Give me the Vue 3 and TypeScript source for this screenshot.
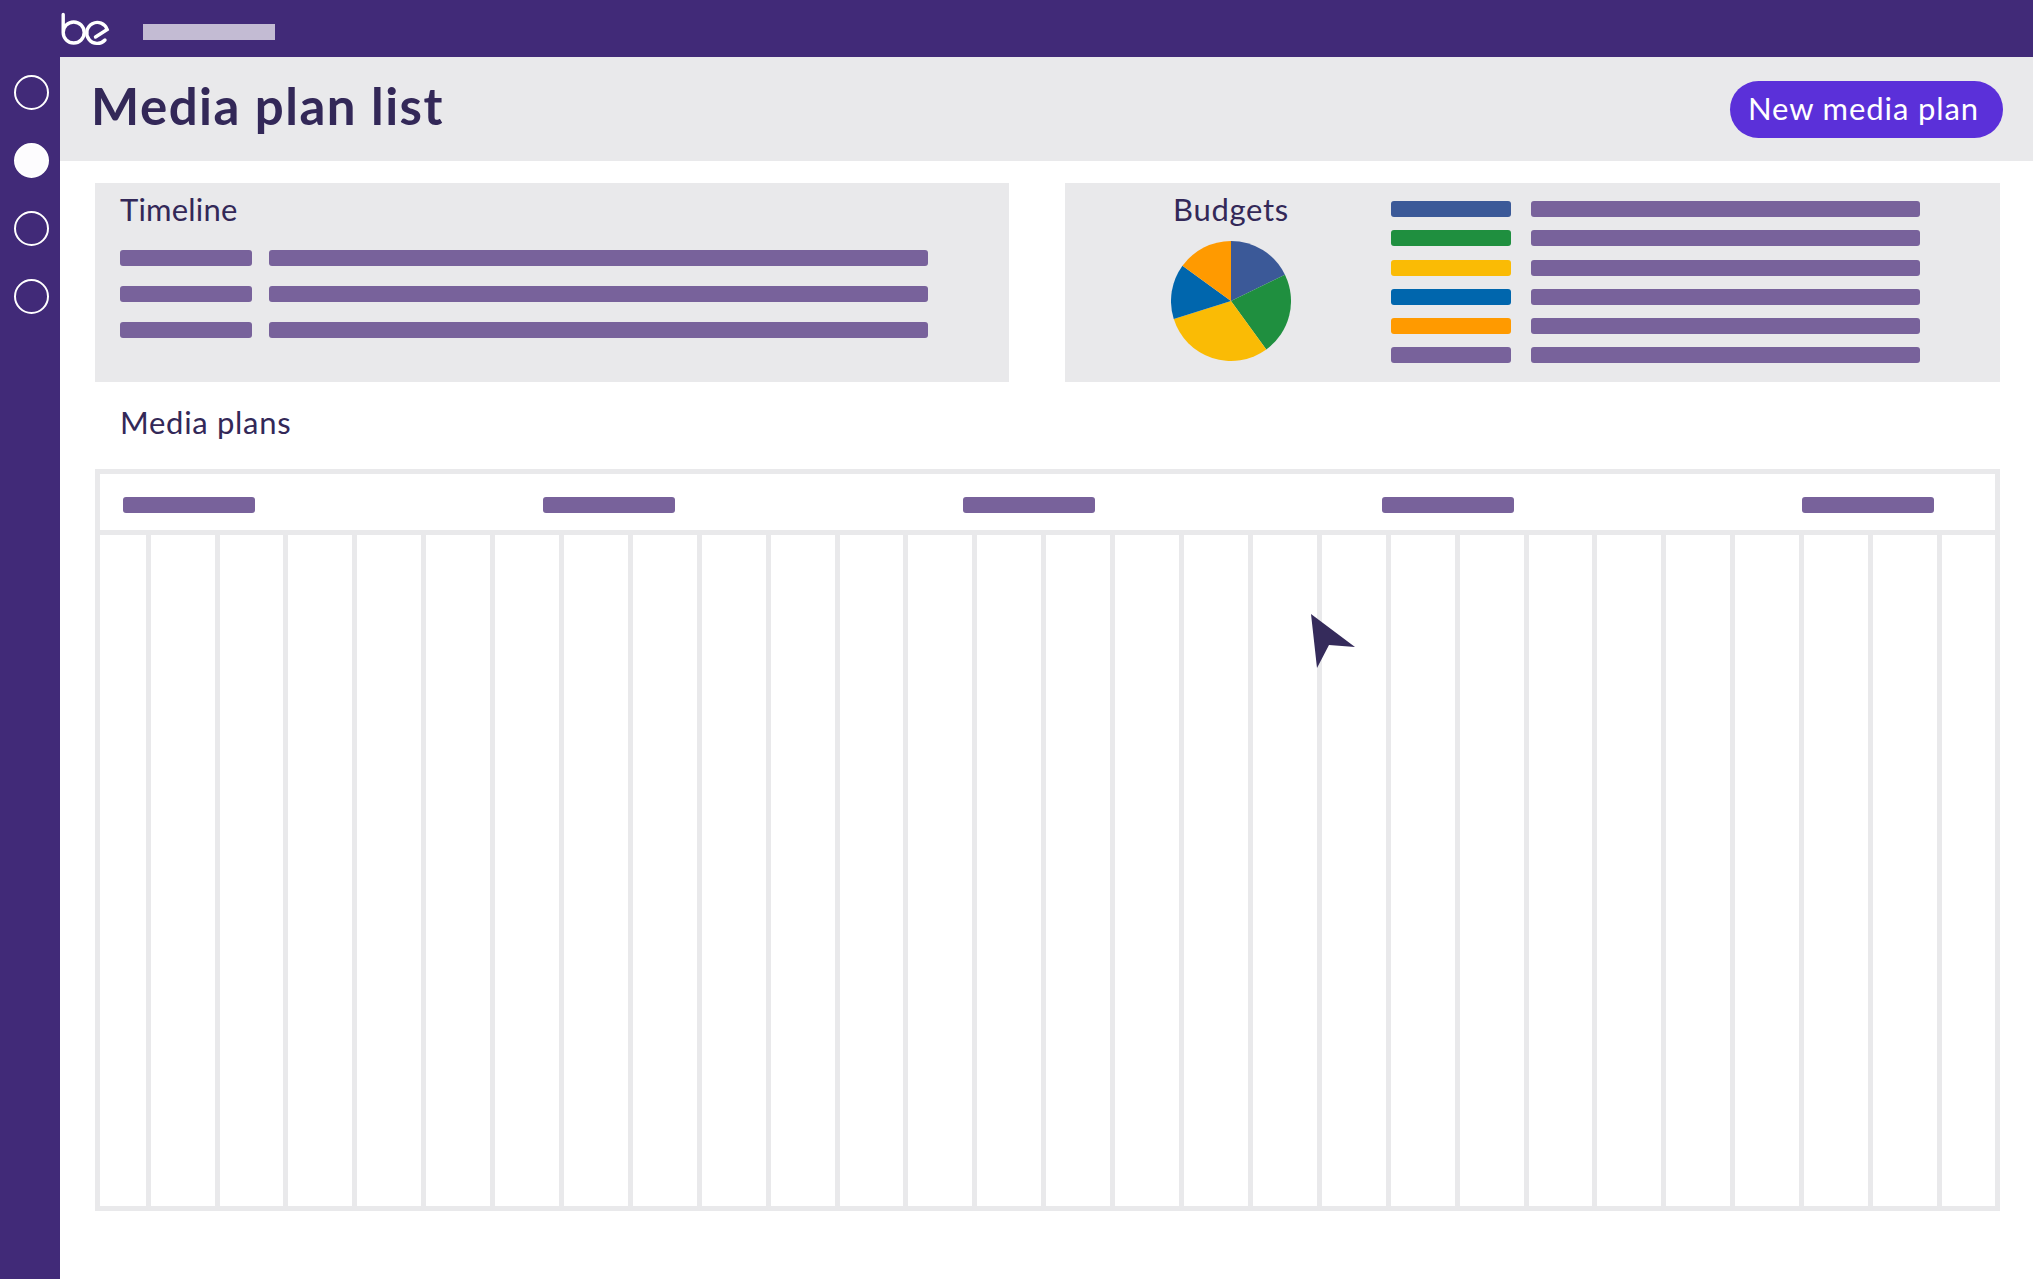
<script setup lang="ts">
const navItems = [false, true, false, false]
const timelineRows = 3
const budgetColors = ['#3b5998', '#1f8f3f', '#fabb05', '#0066ad', '#ff9a00', '#78629b']
const tableHeads = 5
const cols = 28

// pie: start and end angle in degrees, clockwise from the top
const slices = [
  { from: 0, to: 64, color: '#3b5998' },
  { from: 64, to: 144, color: '#1f8f3f' },
  { from: 144, to: 252.5, color: '#fabb05' },
  { from: 252.5, to: 306, color: '#0066ad' },
  { from: 306, to: 360, color: '#ff9a00' },
]

const slicePath = (from: number, to: number) => {
  const r = 60
  const pt = (a: number) => {
    const rad = (a * Math.PI) / 180
    return `${(60 + r * Math.sin(rad)).toFixed(2)} ${(60 - r * Math.cos(rad)).toFixed(2)}`
  }
  const large = to - from > 180 ? 1 : 0
  return `M60 60L${pt(from)}A${r} ${r} 0 ${large} 1 ${pt(to)}Z`
}
</script>

<template>
  <div class="page">
    <header class="topbar">
      <svg class="logo" width="50" height="34" viewBox="0 0 50 34" fill="none" stroke="#fff" stroke-width="3.4" stroke-linecap="round">
        <path d="M3.2 2.5V20.5a10.5 10.5 0 1 0 10.5-10.5A10.5 10.5 0 0 0 3.2 20.5" />
        <path d="M45 28A10.5 10.5 0 1 1 47.2 17.5L35.5 25" />
      </svg>
      <div class="crumb"></div>
    </header>
    <div class="body">
      <nav class="sidebar">
        <span v-for="(active, i) in navItems" :key="i" class="dot" :class="{ active }"></span>
      </nav>
      <main class="main">
        <div class="titlebar">
          <h1>Media plan list</h1>
          <button class="new-btn">New media plan</button>
        </div>
        <section class="panels">
          <div class="panel timeline">
            <h2 class="tl-title">Timeline</h2>
            <div class="tl-rows">
              <div v-for="n in timelineRows" :key="n" class="tl-row">
                <i class="bar short"></i>
                <i class="bar long"></i>
              </div>
            </div>
          </div>
          <div class="panel budgets">
            <div class="pie-col">
              <h2>Budgets</h2>
              <svg width="120" height="120" viewBox="0 0 120 120">
                <path v-for="s in slices" :key="s.from" :d="slicePath(s.from, s.to)" :fill="s.color" />
              </svg>
            </div>
            <div class="legend">
              <div v-for="c in budgetColors" :key="c" class="legend-row">
                <i class="bar key" :style="{ background: c }"></i>
                <i class="bar val"></i>
              </div>
            </div>
          </div>
        </section>
        <h2 class="plans-title">Media plans</h2>
        <div class="table">
          <div class="thead">
            <i v-for="n in tableHeads" :key="n" class="bar short"></i>
          </div>
          <div class="tbody">
            <div v-for="n in cols" :key="n" class="col"></div>
          </div>
        </div>
      </main>
    </div>
    <svg class="cursor" width="44" height="54" viewBox="0 0 44 54">
      <path d="M0 0L44 33L18 31L6 54Z" fill="#352b5b" />
    </svg>
  </div>
</template>

<style>
html,
body {
  margin: 0;
  background: #fff;
}
</style>

<style scoped>
.page {
  position: relative;
  width: 2033px;
  height: 1279px;
  overflow: hidden;
  display: flex;
  flex-direction: column;
  font-family: Lato, 'Noto Sans', sans-serif;
  color: #332858;
}
.topbar {
  height: 57px;
  flex: none;
  background: #412a78;
  display: flex;
  align-items: flex-start;
  padding-left: 60px;
  box-sizing: border-box;
}
.logo {
  margin-top: 12px;
}
.crumb {
  width: 132px;
  height: 16px;
  margin: 24px 0 0 33px;
  background: #c3bbd3;
}
.body {
  flex: 1;
  display: flex;
}
.sidebar {
  width: 60px;
  flex: none;
  background: #412a78;
  display: flex;
  flex-direction: column;
  align-items: center;
  gap: 33px;
  padding-top: 18px;
  box-sizing: border-box;
}
.dot {
  width: 35px;
  height: 35px;
  box-sizing: border-box;
  border: 2px solid #fff;
  border-radius: 50%;
  margin-left: 2px;
}
.dot.active {
  background: #fdfcfe;
}
.main {
  flex: 1;
  min-width: 0;
}
.titlebar {
  height: 104px;
  background: #e9e9eb;
  display: flex;
  align-items: center;
  justify-content: space-between;
  padding: 0 30px 0 31px;
}
h1 {
  margin: -8px 0 0;
  font-size: 51px;
  font-weight: 700;
  line-height: 1;
  letter-spacing: 1.5px;
}
h2 {
  margin: 0;
  font-size: 31px;
  font-weight: 400;
  line-height: 36px;
  letter-spacing: 0.7px;
}
.tl-title {
  letter-spacing: 0.2px;
}
.new-btn {
  width: 273px;
  height: 57px;
  border: 0;
  border-radius: 29px;
  background: #5b30d9;
  color: #fff;
  font: 400 31px Lato, 'Noto Sans', sans-serif;
  letter-spacing: 0.9px;
  padding: 0 6px 3px 0;
}
.panels {
  display: flex;
  justify-content: space-between;
  margin: 22px 33px 0 35px;
}
.panel {
  height: 199px;
  background: #e9e9eb;
  box-sizing: border-box;
}
.timeline {
  width: 914px;
  padding: 8px 25px 0;
}
.budgets {
  width: 935px;
  display: flex;
  padding-top: 8px;
}
.bar {
  display: block;
  height: 16px;
  border-radius: 3px;
  background: #78629b;
}
.bar.short {
  width: 132px;
}
.tl-rows {
  display: flex;
  flex-direction: column;
  gap: 20px;
  margin-top: 23px;
}
.tl-row {
  display: flex;
  gap: 17px;
}
.bar.long {
  width: 659px;
}
.pie-col {
  width: 332px;
  display: flex;
  flex-direction: column;
  align-items: center;
  gap: 14px;
}
.legend {
  display: flex;
  flex-direction: column;
  gap: 13.3px;
  margin: 10px 0 0 -6px;
}
.legend-row {
  display: flex;
  gap: 20px;
}
.bar.key {
  width: 120px;
}
.bar.val {
  width: 389px;
}
.plans-title {
  margin: 22px 0 0 60px;
}
.table {
  width: 1905px;
  margin: 29px 0 0 35px;
  background: #e9e9eb;
  padding: 5px;
  box-sizing: border-box;
}
.thead {
  height: 56px;
  background: #fff;
  display: flex;
  justify-content: space-between;
  align-items: center;
  padding: 6px 61px 0 23px;
  box-sizing: border-box;
}
.tbody {
  display: grid;
  grid-template-columns: 45.7px repeat(26, 63.9px) 1fr;
  gap: 5px;
  margin-top: 5px;
  height: 671px;
}
.col {
  background: #fff;
}
.cursor {
  position: absolute;
  left: 1311px;
  top: 614px;
}
</style>
